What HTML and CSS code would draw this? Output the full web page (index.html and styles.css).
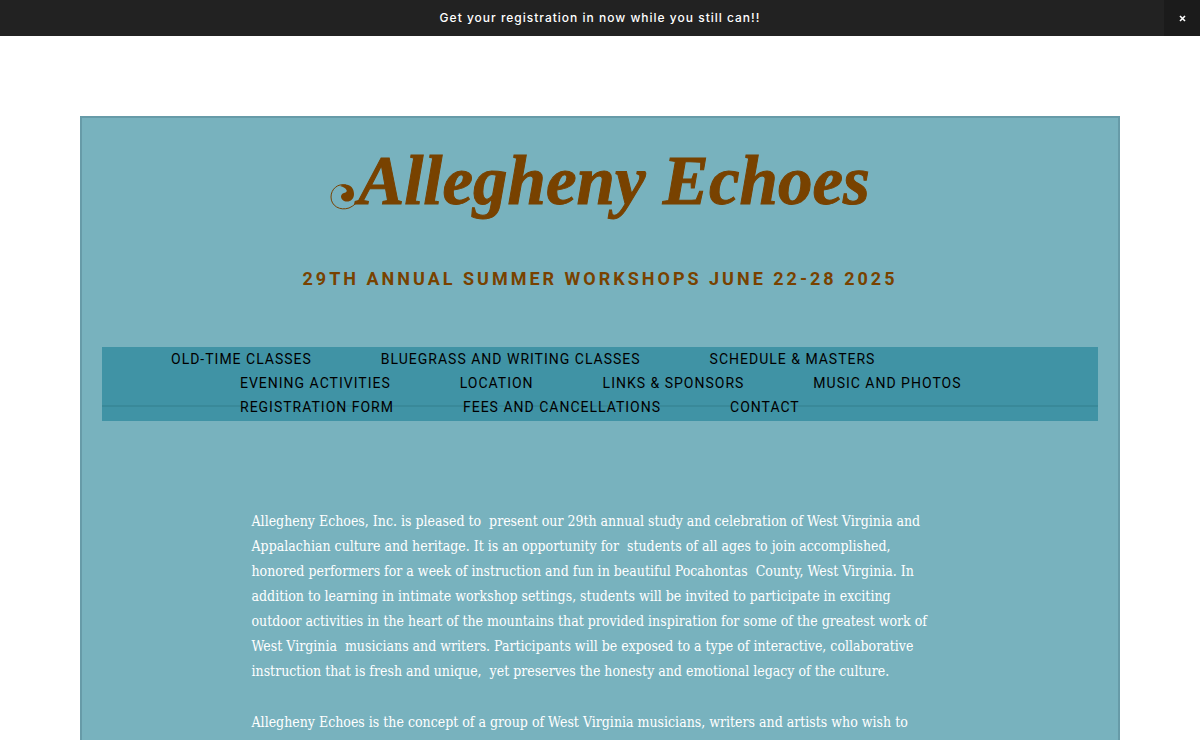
FILE: index.html
```
<!DOCTYPE html>
<html lang="en">
<head>
<meta charset="UTF-8">
<meta name="viewport" content="width=device-width, initial-scale=1.0">
<title>Allegheny Echoes</title>
<link rel="stylesheet" href="styles.css">
</head>
<body>
<div class="announcement">
    <p class="announcement-text">Get your registration in now while you still can!!</p>
    <button class="announcement-close" type="button" aria-label="Close">
        <svg width="7" height="7" viewBox="0 0 7 7"><path d="M1 1l5 5M6 1l-5 5" stroke="#fff" stroke-width="1.6"/></svg>
    </button>
</div>
<div class="site">
    <header class="header">
        <h1 class="logo">
            <a href="#">
                <svg class="swash" width="54" height="50" viewBox="0 0 54 50">
                    <path class="hairline" d="M38 26C33 35 28 44 19 48C10 51 1 46 1 37C1 29 8 23 16 25"/>
                    <path class="drop" d="M10 26C17 22 24 26 24 34C24 40 19 43 14 41C10 39 10 34 14 33C19 32 17 28 10 26Z"/>
                </svg>
                <span>Allegheny Echoes</span>
            </a>
        </h1>
        <h2 class="tagline">29th Annual Summer Workshops June 22-28 2025</h2>
    </header>
    <nav class="nav">
        <ul>
            <li><a href="#">Old-Time Classes</a></li>
            <li><a href="#">Bluegrass and Writing Classes</a></li>
            <li><a href="#">Schedule &amp; Masters</a></li>
            <li><a href="#">Evening Activities</a></li>
            <li><a href="#">Location</a></li>
            <li><a href="#">Links &amp; Sponsors</a></li>
            <li><a href="#">Music and Photos</a></li>
            <li><a href="#">Registration Form</a></li>
            <li><a href="#">Fees and Cancellations</a></li>
            <li><a href="#">Contact</a></li>
        </ul>
    </nav>
    <main class="content">
        <p>
            Allegheny Echoes, Inc. is pleased to &nbsp;present our 29th annual study and celebration of West Virginia and<br>
            Appalachian culture and heritage. It is an opportunity for &nbsp;students of all ages to join accomplished,<br>
            honored performers for a week of instruction and fun in beautiful Pocahontas &nbsp;County, West Virginia. In<br>
            addition to learning in intimate workshop settings, students will be invited to participate in exciting<br>
            outdoor activities in the heart of the mountains that provided inspiration for some of the greatest work of<br>
            West Virginia &nbsp;musicians and writers. Participants will be exposed to a type of interactive, collaborative<br>
            instruction that is fresh and unique, &nbsp;yet preserves the honesty and emotional legacy of the culture.
        </p>
        <p>Allegheny Echoes is the concept of a group of West Virginia musicians, writers and artists who wish to</p>
    </main>
</div>
</body>
</html>
```
FILE: styles.css
```
body {
    margin: 0;
    background-color: #fff;
    font-family: Roboto, sans-serif;
}
a {
    color: inherit;
    text-decoration: none;
}
.announcement {
    display: flex;
    height: 36px;
    background-color: #222;
    color: #fff;
}
.announcement-text {
    flex: 1;
    margin: 0;
    padding-left: 36px;
    font-family: Inter, sans-serif;
    font-size: 12px;
    font-weight: 500;
    letter-spacing: 1px;
    line-height: 36px;
    text-align: center;
}
.announcement-close {
    display: flex;
    align-items: center;
    justify-content: center;
    width: 36px;
    padding: 0;
    border: none;
    background-color: #1b1b1b;
    cursor: pointer;
}
.site {
    margin: 80px 80px 0;
    padding: 20px 20px 60px;
    border: 2px solid #679ba8;
    background-color: #78b2be;
}
.header {
    color: #784200;
    text-align: center;
}
.logo {
    margin: 0;
    font-family: "Liberation Serif", serif;
    font-size: 69px;
    font-style: italic;
    font-weight: bold;
    line-height: 86px;
    -webkit-text-stroke: 1px #784200;
}
.logo a {
    display: flex;
    justify-content: center;
    align-items: center;
}
.swash {
    margin: 8px -26px 0 0;
}
.hairline {
    fill: none;
    stroke: #784200;
    stroke-width: 1;
}
.drop {
    fill: #784200;
}
.tagline {
    margin: 41px 0 54px;
    font-size: 18px;
    font-weight: bold;
    letter-spacing: 3px;
    line-height: 28px;
    text-transform: uppercase;
}
.nav {
    padding-bottom: 2px;
    background: linear-gradient(#398999, #398999) 0 58px / 100% 2px no-repeat #4093a5;
}
.nav ul {
    display: flex;
    flex-wrap: wrap;
    margin: 0;
    padding: 0 69px;
    list-style: none;
}
.nav li {
    margin-left: 69px;
    color: #000;
    font-size: 14px;
    letter-spacing: 1px;
    line-height: 24px;
    text-transform: uppercase;
}
.nav li:first-child {
    margin-left: 0;
}
.content {
    max-width: 697px;
    margin: 88px auto 0;
    color: #fff;
    font-family: "DejaVu Serif Condensed", "DejaVu Serif", serif;
    font-size: 14px;
    line-height: 25px;
}
.content p {
    margin: 0 0 26px;
}
```
